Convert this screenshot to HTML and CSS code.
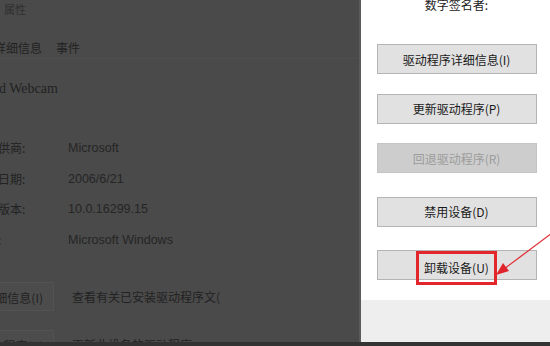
FILE: index.html
```html
<!DOCTYPE html>
<html>
<head>
<meta charset="utf-8">
<title>设备属性 - 驱动程序</title>
<link rel="stylesheet" href="styles.css">
</head>
<body>
  <div class="screen">
    <div class="backdrop">
      <div class="win-title">属性</div>
      <div class="tabs"><span class="tab">详细信息</span><span class="tab">事件</span></div>
      <div class="device-name">d Webcam</div>

      <div class="props">
        <div class="prop"><span class="key">供商:</span><span class="val">Microsoft</span></div>
        <div class="prop"><span class="key">日期:</span><span class="val">2006/6/21</span></div>
        <div class="prop"><span class="key">版本:</span><span class="val">10.0.16299.15</span></div>
        <div class="prop"><span class="key">:</span><span class="val">Microsoft Windows</span></div>
      </div>

      <div class="actions">
        <div class="action"><span class="ghost-btn">细信息(I)</span><span class="desc">查看有关已安装驱动程序文(</span></div>
        <div class="action"><span class="ghost-btn">程序(P)</span><span class="desc">更新此设备的驱动程序</span></div>
      </div>
    </div>

    <div class="panel">
      <div class="panel-body">
        <div class="signer">数字签名者:</div>
        <button class="btn">驱动程序详细信息(I)</button>
        <button class="btn">更新驱动程序(P)</button>
        <button class="btn" disabled>回退驱动程序(R)</button>
        <button class="btn btn-low">禁用设备(D)</button>
        <button class="btn btn-low"><span class="mark">卸载设备(U)</span></button>
      </div>
      <div class="panel-foot"></div>
    </div>
  </div>

  <svg class="arrow" width="60" height="50" viewBox="0 0 60 50">
    <line x1="58" y1="3" x2="10" y2="39" stroke="#e0343a" stroke-width="1.3"/>
    <polygon points="2,45 9,33 15,41" fill="#e0242c"/>
  </svg>
</body>
</html>
```

FILE: styles.css
```css
html, body { margin: 0; padding: 0; }
body {
  width: 550px;
  height: 346px;
  overflow: hidden;
  background: #333333;
  font-family: "Noto Sans CJK SC", "Noto Sans", sans-serif;
  position: relative;
}

.screen {
  display: flex;
  height: 342px;
}

/* dimmed properties window on the left */
.backdrop {
  width: 359px;
  background: #4a4a4a;
  color: #222222;
  overflow: hidden;
  font-size: 12px;
  border-right: 2px solid #5a5a5a;
}
.win-title {
  height: 20px;
  line-height: 18px;
  margin-left: 4px;
  color: #2f2f2f;
  font-size: 11px;
}
.tabs {
  height: 38px;
  line-height: 56px;
  margin-left: -6px;
  display: flex;
  gap: 14px;
  border-bottom: 1px solid #4f4f4f;
}
.device-name {
  height: 50px;
  line-height: 60px;
  margin-left: -1px;
  font-family: "Liberation Serif", "DejaVu Serif", serif;
  font-size: 14px;
}

.props {
  padding-top: 24px;
}
.prop {
  display: flex;
  height: 30.5px;
  line-height: 30px;
}
.key {
  width: 70px;
  margin-left: -2px;
}
.val {
  font-family: "Liberation Sans", "Noto Sans", sans-serif;
  font-size: 12.5px;
  color: #252525;
}

.actions {
  padding-top: 17px;
}
.action {
  display: flex;
  align-items: center;
  height: 48px;
}
.ghost-btn {
  width: 68px;
  height: 29px;
  line-height: 29px;
  margin-left: -14px;
  border: 1px solid #535353;
  background: #4c4c4c;
  text-align: right;
  padding-right: 10px;
  box-sizing: border-box;
}
.desc {
  margin-left: 18px;
}

/* right side: driver buttons */
.panel {
  flex: 1;
  display: flex;
  flex-direction: column;
  background: #ffffff;
}
.panel-body {
  flex: 1;
  display: flex;
  flex-direction: column;
  align-items: center;
  padding-left: 2px;
}
.signer {
  font-size: 12px;
  line-height: 12px;
  margin-top: -1px;
  height: 45px;
  color: #1c1c1c;
}
.btn {
  width: 160px;
  height: 30px;
  margin-bottom: 19.5px;
  background: #e1e1e1;
  border: 1px solid #b4b4b4;
  font-family: "Noto Sans CJK SC", "Noto Sans", sans-serif;
  font-size: 12px;
  color: #1a1a1a;
  padding: 0;
  display: flex;
  align-items: center;
  justify-content: center;
}
.btn:disabled {
  background: #cdcdcd;
  border-color: #c4c4c4;
  color: #9c9c9c;
}
.btn-low { margin-top: 4px; }
.mark {
  display: inline-block;
  padding: 5px 5px;
  border: 3px solid #e3262c;
  line-height: 18px;
  margin-top: 5px;
}

.panel-foot {
  height: 42px;
  background: #eeeeee;
}

.arrow {
  position: absolute;
  left: 494px;
  top: 230px;
}
```
